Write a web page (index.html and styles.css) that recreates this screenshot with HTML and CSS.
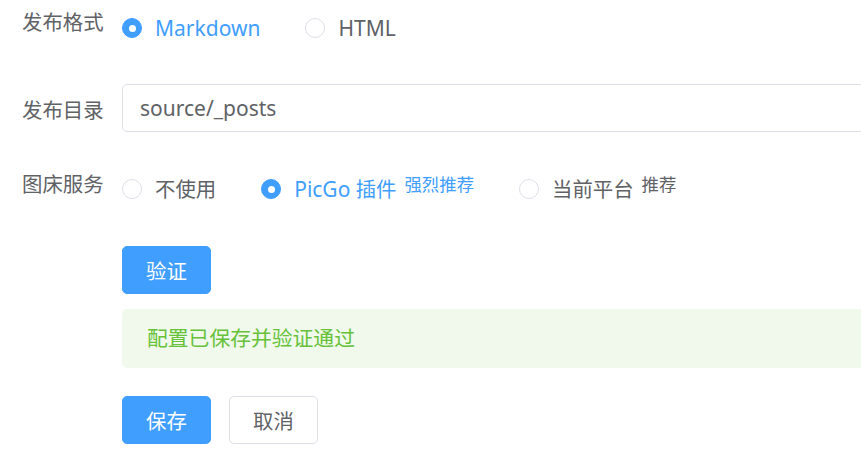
FILE: index.html
```html
<!DOCTYPE html>
<html lang="zh-CN">
<head>
<meta charset="utf-8">
<title>发布设置</title>
<link rel="stylesheet" href="styles.css">
</head>
<body>
<form class="form">
  <div class="item item-format">
    <label class="label">发布格式</label>
    <div class="content radios">
      <label class="radio checked"><span class="dot"></span><span class="rtext latin">Markdown</span></label>
      <label class="radio"><span class="dot"></span><span class="rtext latin">HTML</span></label>
    </div>
  </div>
  <div class="item item-dir">
    <label class="label">发布目录</label>
    <div class="content">
      <input class="input" type="text" value="source/_posts">
    </div>
  </div>
  <div class="item item-img">
    <label class="label">图床服务</label>
    <div class="content radios">
      <label class="radio"><span class="dot"></span><span class="rtext">不使用</span></label>
      <label class="radio checked"><span class="dot"></span><span class="rtext"><span class="latin">PicGo</span> 插件</span><span class="tag">强烈推荐</span></label>
      <label class="radio"><span class="dot"></span><span class="rtext">当前平台</span><span class="tag">推荐</span></label>
    </div>
  </div>
  <div class="block verify">
    <button type="button" class="btn primary">验证</button>
  </div>
  <div class="block alert">配置已保存并验证通过</div>
  <div class="block actions">
    <button type="button" class="btn primary">保存</button>
    <button type="button" class="btn plain">取消</button>
  </div>
</form>
</body>
</html>
```
FILE: styles.css
```css
html, body {
  margin: 0;
  padding: 0;
  background: #ffffff;
  overflow: hidden;
}
body {
  font-family: "Noto Sans", "Open Sans", "Noto Sans CJK SC", sans-serif;
  color: #606266;
  font-size: 20.4px;
}
.form {
  width: 1100px;
}
.latin {
  font-size: 21px;
}
.item {
  display: flex;
  align-items: flex-start;
}
.label {
  width: 100px;
  padding-left: 22px;
  line-height: 44px;
  font-size: 20.4px;
  color: #606266;
  flex: none;
}
.content {
  flex: 1;
}
.item-format .radios {
  padding-top: 6px;
}
.item-format {
  margin-bottom: 34px;
}
.item-dir .label {
  padding-top: 2px;
  line-height: 48px;
}
.item-dir {
  margin-bottom: 28px;
}
.item-img .radios {
  padding-top: 5px;
}
.radios {
  display: flex;
  align-items: center;
  height: 44px;
}
.radio {
  display: flex;
  align-items: center;
  margin-right: 45px;
  line-height: 44px;
  white-space: nowrap;
}
.dot {
  box-sizing: border-box;
  width: 20px;
  height: 20px;
  border-radius: 50%;
  border: 1px solid #dcdfe6;
  background: #fff;
  flex: none;
  display: flex;
  align-items: center;
  justify-content: center;
}
.radio.checked .dot {
  background: #409eff;
  border-color: #409eff;
}
.radio.checked .dot::after {
  content: "";
  width: 7px;
  height: 7px;
  border-radius: 50%;
  background: #fff;
}
.rtext {
  padding-left: 13px;
  color: #606266;
}
.radio.checked .rtext {
  color: #409eff;
}
.tag {
  font-size: 17.4px;
  align-self: flex-start;
  line-height: 35px;
  margin-left: 8px;
  color: #606266;
}
.radio.checked .tag {
  color: #409eff;
}
.input {
  box-sizing: border-box;
  display: block;
  width: 100%;
  height: 48px;
  border: 1px solid #dcdfe6;
  border-radius: 5px;
  padding: 0 17px;
  font-family: inherit;
  font-size: 21px;
  color: #606266;
  outline: none;
  background: #fff;
}
.block {
  margin-left: 122px;
}
.verify {
  margin-top: 35px;
}
.btn {
  box-sizing: border-box;
  height: 48px;
  width: 89px;
  border-radius: 5px;
  font-family: inherit;
  font-size: 20.4px;
  padding: 0;
  cursor: pointer;
}
.btn.primary {
  background: #409eff;
  border: 1px solid #409eff;
  color: #fff;
}
.btn.plain {
  background: #fff;
  border: 1px solid #dcdfe6;
  color: #606266;
  margin-left: 18px;
}
.alert {
  margin-top: 15px;
  height: 59px;
  box-sizing: border-box;
  padding: 0 25px;
  background: #f0f9eb;
  border-radius: 5px;
  color: #67c23a;
  line-height: 59px;
  font-size: 20.8px;
}
.actions {
  margin-top: 28px;
  display: flex;
}
```
